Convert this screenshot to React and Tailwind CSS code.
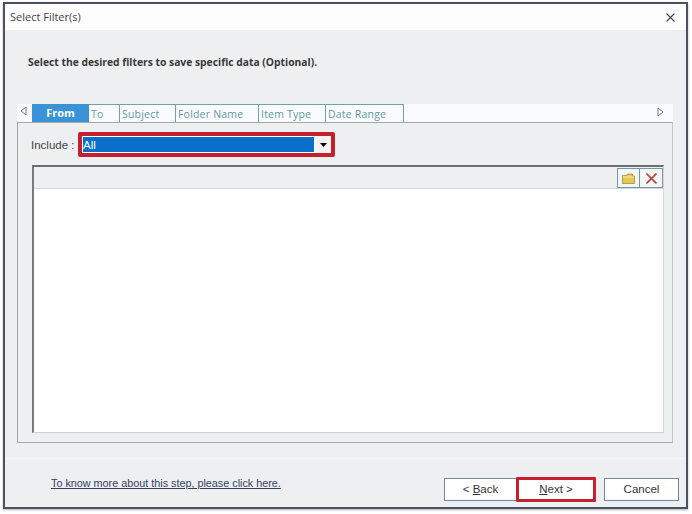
const tabs = [
  { label: "To", width: "w-[31px]" },
  { label: "Subject", width: "w-[56px]" },
  { label: "Folder Name", width: "w-[83px]" },
  { label: "Item Type", width: "w-[67px]" },
  { label: "Date Range", width: "w-[78px]" },
];

export default function App() {
  return (
    <div className="w-[692px] h-[514px] bg-white pt-[2px] pl-[3px] font-['Open_Sans',sans-serif] text-[#333]">
      <div className="w-[685px] h-[507px] border-2 border-[#4a5264] flex flex-col bg-[#eeeff0] shadow-[0_1px_2px_rgba(0,0,0,0.3)]">
        {/* title bar */}
        <div className="h-[26px] shrink-0 bg-[#fdfdfe] flex items-center justify-between pl-[5px] pr-[11px] text-[11px] text-[#444]">
          <span>Select Filter(s)</span>
          <svg width="9" height="9" viewBox="0 0 9 9" className="stroke-[#444]" strokeWidth="1.1">
            <path d="M0.5 0.5l8 8M8.5 0.5l-8 8" />
          </svg>
        </div>

        <div className="pt-[25px] pl-[23px] h-[74px] shrink-0 text-[10.3px] font-bold text-[#3a3a3a]">
          Select the desired filters to save specific data (Optional).
        </div>

        {/* tab strip */}
        <div className="mx-[12px] w-[656px] h-[18px] shrink-0 bg-[#fafbfc] flex relative">
          <svg width="7" height="10" viewBox="0 0 7 10" className="absolute left-[3px] top-[2px] fill-white stroke-[#777]">
            <path d="M6 1v8L1 5z" />
          </svg>
          <div className="ml-[15px] w-[57px] h-[18px] pt-[1px] bg-[#3a93d6] text-white text-[11px] font-bold flex items-center justify-center">
            From
          </div>
          {tabs.map((tab) => (
            <div
              key={tab.label}
              className={`${tab.width} h-[18px] border-t border-r border-[#6fa3a8] pl-[2px] text-[10.5px] tracking-[0.2px] text-[#5f9aa6] leading-[19px] whitespace-nowrap`}
            >
              {tab.label}
            </div>
          ))}
          <svg width="7" height="10" viewBox="0 0 7 10" className="absolute right-[9px] top-[3px] fill-white stroke-[#777]">
            <path d="M1 1v8l5-4z" />
          </svg>
        </div>

        {/* tab panel */}
        <div className="mx-[12px] w-[656px] h-[321px] shrink-0 border border-[#a6a8ab] border-r-[#c4c6c8] px-[14px] flex flex-col">
          <div className="h-[42px] shrink-0 flex items-start pt-[9px] text-[11.5px] text-[#444]">
            <span className="w-[47px] -ml-px shrink-0 leading-[27px] font-['Liberation_Sans',sans-serif]">Include :</span>
            <div className="w-[257px] h-[25px] border-[4px] border-[#c4202e] rounded-[2px] flex">
              <div className="w-[233px] bg-[#0a6fcb] border border-white text-white text-[11.5px] leading-[16px] font-['Liberation_Sans',sans-serif]">
                All
              </div>
              <div className="w-[16px] bg-[#f3f3f3] flex items-center justify-center">
                <svg width="7" height="4" viewBox="0 0 7 4" className="fill-black">
                  <path d="M0 0h7L3.5 4z" />
                </svg>
              </div>
            </div>
          </div>

          <div className="w-[632px] h-[268px] border-t-2 border-l-2 border-t-[#6e6e6e] border-l-[#7a7a7a] border-r border-b border-r-[#d8d8d8] border-b-[#d0d0d0] flex flex-col">
            <div className="h-[22px] shrink-0 bg-[#eeeff0] border-b border-[#d6d6d6] flex justify-end pt-[1px]">
              <div className="w-[23px] h-[20px] border border-[#6f9ca3] bg-[#f4f5f6] flex items-center justify-center">
                <svg width="13" height="11" viewBox="0 0 13 11">
                  <path d="M0.5 2.5h4l1-1.5h5v2h2v7.5h-12z" fill="#e8c84e" stroke="#9a8232" strokeWidth="0.7" />
                  <path d="M1 4h11" stroke="#fbeeb0" />
                </svg>
              </div>
              <div className="w-[23px] h-[20px] border border-l-0 border-[#6f9ca3] bg-[#f4f5f6] flex items-center justify-center">
                <svg width="11" height="11" viewBox="0 0 11 11" className="stroke-[#b8483f]" strokeWidth="1.6">
                  <path d="M0.5 0.5l10 10M10.5 0.5l-10 10" />
                </svg>
              </div>
            </div>
            <div className="flex-1 bg-white" />
          </div>
        </div>

        {/* footer */}
        <div className="flex-1 border-t border-[#f4f5f6] mt-[15px] flex items-start pt-[18px] pl-[46px] pr-[7px]">
          <a className="-mt-px text-[10.8px] text-[#33415f] underline font-['Liberation_Sans',sans-serif] leading-[14px]">
            To know more about this step, please click here.
          </a>
          <div className="ml-auto flex items-center text-[11.5px] text-[#333] font-['Liberation_Sans',sans-serif]">
            <button className="w-[73px] h-[23px] border border-[#6f8b93] bg-white">
              &lt; <span className="underline">B</span>ack
            </button>
            <button className="w-[80px] h-[25px] -ml-px border-[3px] border-[#c4202e] rounded-[1px] bg-white">
              <span className="underline">N</span>ext &gt;
            </button>
            <button className="w-[75px] h-[23px] ml-[8px] border border-[#6f8b93] bg-white">Cancel</button>
          </div>
        </div>
      </div>
    </div>
  );
}
